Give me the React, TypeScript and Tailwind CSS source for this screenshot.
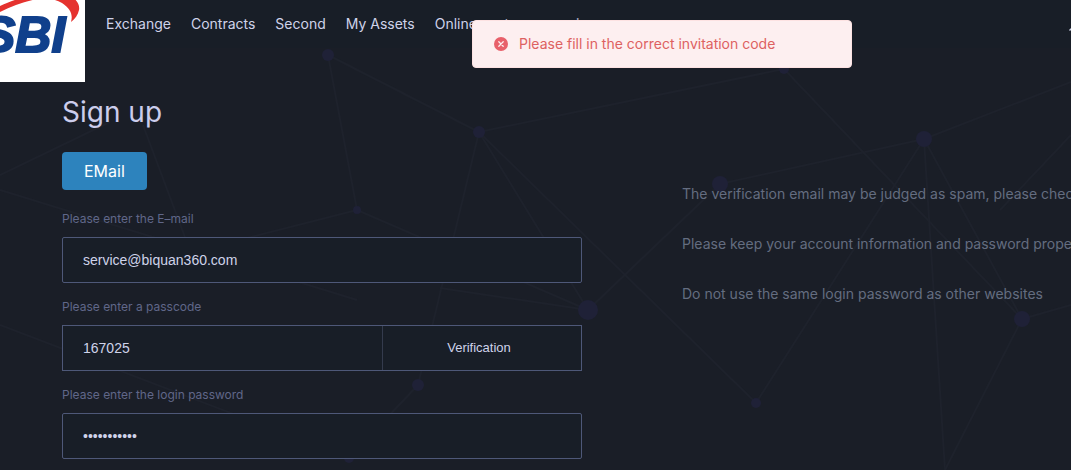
import React, { useState } from 'react';

const NAV_ITEMS = ['Exchange', 'Contracts', 'Second', 'My Assets', 'Online customer service'];

const NOTES = [
  'The verification email may be judged as spam, please check the spam box',
  'Please keep your account information and password properly',
  'Do not use the same login password as other websites',
];

const DOTS = [
  { x: 328, y: 55, r: 6 },
  { x: 479, y: 132, r: 6 },
  { x: 357, y: 210, r: 4 },
  { x: 588, y: 310, r: 10 },
  { x: 418, y: 385, r: 6 },
  { x: 349, y: 458, r: 5 },
  { x: 720, y: 184, r: 8 },
  { x: 784, y: 69, r: 5 },
  { x: 924, y: 139, r: 8 },
  { x: 1022, y: 319, r: 8 },
  { x: 756, y: 403, r: 5 },
];

const LINES = [
  [328, 55, 479, 132],
  [328, 55, 357, 210],
  [0, 175, 110, 122],
  [479, 132, 784, 69],
  [479, 132, 588, 310],
  [479, 132, 418, 385],
  [479, 132, 756, 403],
  [357, 210, 588, 310],
  [357, 210, 200, 250],
  [143, 125, 186, 240],
  [0, 190, 357, 300],
  [0, 325, 349, 458],
  [440, 288, 588, 310],
  [588, 310, 720, 184],
  [418, 385, 349, 458],
  [720, 184, 924, 139],
  [784, 69, 1022, 319],
  [924, 139, 1071, 82],
  [924, 139, 756, 403],
  [924, 139, 945, 470],
  [924, 139, 1022, 319],
  [1071, 135, 1000, 210],
  [1022, 319, 945, 470],
  [1022, 319, 1071, 305],
];

const Background: React.FC = () => (
  <svg className="absolute left-0 top-0 -z-10" width="1071" height="470" viewBox="0 0 1071 470" aria-hidden="true">
    <g stroke="#1e222c" strokeWidth="2">
      {LINES.map(([x1, y1, x2, y2]) => (
        <line key={`${x1}-${y1}-${x2}-${y2}`} x1={x1} y1={y1} x2={x2} y2={y2} />
      ))}
    </g>
    <g fill="#1f2137">
      {DOTS.map(dot => (
        <circle key={`${dot.x}-${dot.y}`} cx={dot.x} cy={dot.y} r={dot.r} />
      ))}
    </g>
  </svg>
);

const Logo: React.FC = () => (
  <a href="#" aria-label="SBI" className="block h-[82px] w-[85px] shrink-0 overflow-hidden bg-white">
    <svg width="85" height="82" viewBox="0 0 85 82">
      <path
        d="M0 6C8 2 16 0 22 -3L70 -5C77 0 80 5 79 10C78 15 75 19 71 22C73 15 71 9 62 3C56 0 50 -2 44 -2C28 0 14 5 0 12Z"
        fill="#e5322e"
      />
      <text
        x="-18"
        y="52"
        fontFamily="'Liberation Sans', Arial, sans-serif"
        fontSize="50"
        fontWeight="700"
        fontStyle="italic"
        fill="#10408c"
        stroke="#10408c"
        strokeWidth="2"
      >
        SBI
      </text>
    </svg>
  </a>
);

const Header: React.FC = () => (
  <header className="flex h-12 items-start bg-[#181e27]">
    <Logo />
    <nav className="ml-[21px] flex h-12 items-center gap-5 text-sm whitespace-nowrap text-[#cfd3ea]">
      {NAV_ITEMS.map(item => (
        <a key={item} href="#">{item}</a>
      ))}
    </nav>
    <button type="button" aria-label="Open menu" className="-mr-2 ml-auto flex h-14 shrink-0 items-center text-[#cfd3ea]">
      <svg width="10" height="6" viewBox="0 0 10 6" fill="none" stroke="currentColor" strokeWidth="1.4">
        <path d="M0.5 5.5L5 0.8L9.5 5.5" />
      </svg>
    </button>
  </header>
);

const Toast: React.FC = () => (
  <div
    role="alert"
    className="absolute top-5 left-[472px] flex h-12 w-[380px] items-center gap-[11px] rounded border border-[#fde2e2] bg-[#fdeff0] pl-[21px] text-sm text-[#dd6161]"
  >
    <svg width="14" height="14" viewBox="0 0 14 14" aria-hidden="true">
      <circle cx="7" cy="7" r="7" fill="#e8606a" />
      <path d="M4.8 4.8L9.2 9.2M9.2 4.8L4.8 9.2" stroke="#fdeff0" strokeWidth="1.3" strokeLinecap="round" />
    </svg>
    <p>Please fill in the correct invitation code</p>
  </div>
);

const inputClass =
  'w-full bg-transparent px-5 font-["Liberation_Sans",Arial,sans-serif] text-sm text-[#cfd3ea] outline-none';

const App: React.FC = () => {
  const [email, setEmail] = useState('service@biquan360.com');
  const [passcode, setPasscode] = useState('167025');
  const [password, setPassword] = useState('abcdefghijk');

  return (
    <div className="relative isolate min-h-screen overflow-hidden bg-[#1a1e27] font-[Inter,sans-serif]">
      <Background />
      <Header />

      <main className="flex items-start gap-[100px] pl-[62px]">
        <form className="w-[520px] shrink-0 pt-11" onSubmit={e => e.preventDefault()}>
          <h1 className="text-[28px] leading-10 text-[#cccdec]">Sign up</h1>
          <button type="button" className="mt-5 block h-[38px] rounded bg-[#2d83bd] px-[22px] text-base text-white">
            EMail
          </button>

          <label htmlFor="email" className="mt-5 block text-xs leading-[18px] text-[#606789]">
            Please enter the E–mail
          </label>
          <div className="mt-[9px] flex h-[46px] rounded-xs border border-[#4e5878] bg-[#181e27]">
            <input id="email" type="email" value={email} onChange={e => setEmail(e.target.value)} className={inputClass} />
          </div>

          <label htmlFor="passcode" className="mt-[15px] block text-xs leading-[18px] text-[#606789]">
            Please enter a passcode
          </label>
          <div className="mt-[9px] flex h-[46px] border border-[#4e5878] bg-[#181e27]">
            <input id="passcode" value={passcode} onChange={e => setPasscode(e.target.value)} className={inputClass} />
            <button
              type="button"
              className="w-[199px] shrink-0 border-l border-[#343b4d] pr-1.5 font-['Liberation_Sans',Arial,sans-serif] text-[13px] text-[#cfd3ea]"
            >
              Verification
            </button>
          </div>

          <label htmlFor="password" className="mt-[15px] block text-xs leading-[18px] text-[#606789]">
            Please enter the login password
          </label>
          <div className="mt-[9px] flex h-[46px] rounded-xs border border-[#4e5878] bg-[#181e27]">
            <input
              id="password"
              type="password"
              value={password}
              onChange={e => setPassword(e.target.value)}
              className={inputClass}
            />
          </div>
        </form>

        <section className="space-y-[30px] pt-[136px] text-sm leading-5 whitespace-nowrap text-[#646d80]">
          {NOTES.map(note => (
            <p key={note}>{note}</p>
          ))}
        </section>
      </main>

      <Toast />
    </div>
  );
};

export default App;
